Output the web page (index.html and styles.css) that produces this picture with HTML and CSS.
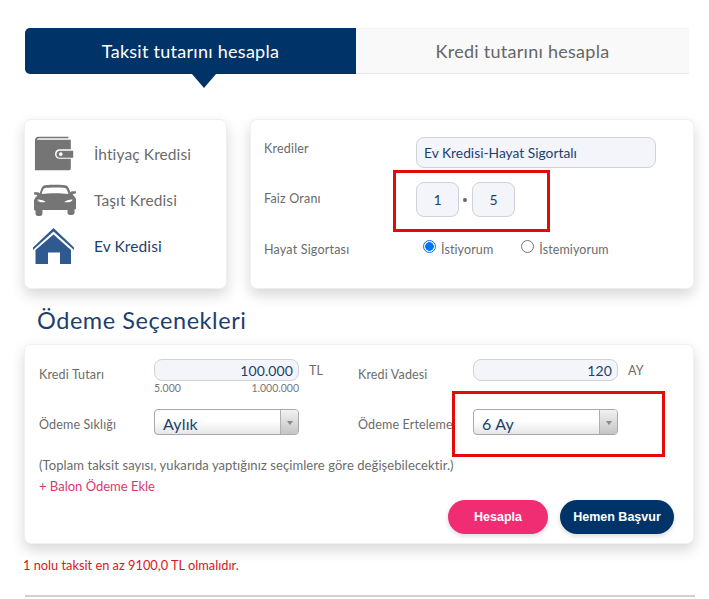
FILE: index.html
```html
<!DOCTYPE html>
<html lang="tr">
<head>
    <meta charset="UTF-8">
    <meta name="viewport" content="width=device-width, initial-scale=1.0">
    <title>Kredi Hesaplama</title>
    <link rel="stylesheet" href="styles.css">
</head>
<body>
    <div class="page">
        <div class="tabs">
            <div class="tab active">Taksit tutarını hesapla</div>
            <div class="tab">Kredi tutarını hesapla</div>
        </div>

        <div class="top-row">
            <div class="card types">
                <div class="type">
                    <svg class="type-icon" viewBox="0 0 46 36" width="44" height="36">
                        <path fill="#757575" d="M5 0h31v1.500H5.500C4 1.500 3 2.500 3 3h35.500v10H27c-3 0-5 2-5 5s2 5 5 5h11.500v10c0 1.500-.5 2-2 2H1V4C1 1.500 2.500 0 5 0z"/>
                        <path fill="#757575" d="M27 14.500h14v7.500H27c-2 0-3.500-1.700-3.500-3.800s1.500-3.700 3.500-3.700zm1 1.800a1.900 1.900 0 1 0 0 3.800 1.900 1.900 0 0 0 0-3.800z"/>
                    </svg>
                    <span>İhtiyaç Kredisi</span>
                </div>
                <div class="type">
                    <svg class="type-icon" viewBox="1 0 44 32" width="44" height="32">
                        <path fill="#757575" fill-rule="evenodd" d="M11 1.500C14 .5 30 .5 33 1.500c1.500.5 2.500 2 3.500 4.500l1 2.500 1-1.200H43v2l-3.500 1c1.500 2 3 3 3.500 5v8.700c0 1-.7 1.500-1.500 1.500v3c0 1.500-1 2.500-2.500 2.500h-2c-1.500 0-2.500-1-2.500-2.500v-2.500H9.500v2.500C9.500 31 8.500 32 7 32H5c-1.500 0-2.500-1-2.500-2.500v-3C1.700 26.500 1 26 1 25v-8.700c.5-2 2-3 3.500-5L1 10.300v-2h4.500l1 1.200 1-2.500C8.500 3.500 9.500 2 11 1.500zM12 4c-1 .3-1.500 1-2.200 2.500L8.500 10c7-1 20-1 27 0l-1.300-3.500C33.500 5 33 4.300 32 4 28 3.200 16 3.200 12 4zM4.500 15.500c0 1.500 1.500 2.500 4 2.700 2 .2 3.500 0 4-.3-1-1.200-5-2.400-8-2.400zm35 0c-3 0-7 1.200-8 2.400.5.300 2 .5 4 .3 2.500-.2 4-1.200 4-2.700z"/>
                    </svg>
                    <span>Taşıt Kredisi</span>
                </div>
                <div class="type current">
                    <svg class="type-icon" viewBox="2 0 44 36" width="44" height="36">
                        <path fill="#2f5a8f" d="M21.500 0 42 19.500v2.500L21.500 3.500 1 22v-2.500z"/>
                        <path fill="#2f5a8f" d="M21.500 6.500 39 22v14H28V24.500H16V36H3.500V22z"/>
                    </svg>
                    <span>Ev Kredisi</span>
                </div>
            </div>

            <div class="card credit">
                <div class="credit-row">
                    <label>Krediler</label>
                    <div class="field wide">Ev Kredisi-Hayat Sigortalı</div>
                </div>
                <div class="credit-row rate-row">
                    <label>Faiz Oranı</label>
                    <div class="rate">
                        <div class="field digit">1</div>
                        <span class="dot"></span>
                        <div class="field digit">5</div>
                    </div>
                </div>
                <div class="credit-row insurance-row">
                    <label>Hayat Sigortası</label>
                    <div class="radios">
                        <span class="radio-item"><span class="radio checked"></span>İstiyorum</span>
                        <span class="radio-item"><span class="radio"></span>İstemiyorum</span>
                    </div>
                </div>
            </div>
        </div>

        <h2 class="section-title">Ödeme Seçenekleri</h2>

        <div class="card payment">
            <div class="pay-grid">
                <label>Kredi Tutarı</label>
                <div class="amount">
                    <div class="field number">100.000</div>
                    <div class="limits"><span>5.000</span><span>1.000.000</span></div>
                </div>
                <span class="unit">TL</span>
                <label>Kredi Vadesi</label>
                <div class="amount">
                    <div class="field number">120</div>
                </div>
                <span class="unit">AY</span>

                <label>Ödeme Sıklığı</label>
                <div class="select">Aylık<span class="select-arrow"></span></div>
                <span></span>
                <label>Ödeme Erteleme</label>
                <div class="select">6 Ay<span class="select-arrow"></span></div>
                <span></span>
            </div>

            <p class="note">(Toplam taksit sayısı, yukarıda yaptığınız seçimlere göre değişebilecektir.)</p>
            <a class="balloon">+ Balon Ödeme Ekle</a>

            <div class="actions">
                <div class="btn pink">Hesapla</div>
                <div class="btn navy">Hemen Başvur</div>
            </div>
        </div>

        <p class="error">1 nolu taksit en az 9100,0 TL olmalıdır.</p>
        <hr class="line">

        <div class="mark mark-rate"></div>
        <div class="mark mark-delay"></div>
    </div>
</body>
</html>
```

FILE: styles.css
```css
* {
    box-sizing: border-box;
}
html, body {
    margin: 0;
    height: 100%;
    overflow: hidden;
}
body {
    background-color: white;
    font-family: "Lato", "Liberation Sans", sans-serif;
    color: #666;
}
.page {
    position: relative;
    width: 709px;
    height: 599px;
    padding: 28px 14px 0 24px;
}
.tabs {
    display: flex;
    margin-left: 1px;
    width: 664px;
    height: 46px;
}
.tab {
    flex: 1;
    display: flex;
    align-items: center;
    justify-content: center;
    font-size: 18px;
    letter-spacing: 0.27px;
    background-color: #f9f9f9;
    border-bottom: 1px solid #e6e6e6;
    border-top: 1px solid #f3f3f3;
    color: #666;
}
.tab.active {
    position: relative;
    flex: 0 0 331px;
    background-color: #003468;
    border: 0;
    border-radius: 5px 0 0 5px;
    color: white;
}
.tab.active::after {
    content: "";
    position: absolute;
    left: 167px;
    top: 46px;
    border-left: 12px solid transparent;
    border-right: 12px solid transparent;
    border-top: 14px solid #003468;
}
.top-row {
    display: flex;
    gap: 23px;
    margin-top: 45px;
}
.card {
    background-color: white;
    border: 1px solid #f0f0f0;
    border-radius: 7px;
    box-shadow: 0 6px 14px rgba(0,0,0,0.16);
}
.types {
    width: 203px;
    height: 170px;
    padding: 11px 0 0 9px;
}
.type {
    display: flex;
    align-items: center;
    height: 46px;
    font-size: 15.5px;
    letter-spacing: 0.1px;
    color: #6b6b6b;
}
.type-icon {
    flex: none;
    margin-right: 16px;
    overflow: visible;
}
.type.current {
    color: #1d3f6e;
}
.credit {
    width: 444px;
    height: 170px;
    padding-top: 17px;
}
.credit-row {
    display: flex;
    align-items: center;
}
.credit-row label {
    width: 165px;
    padding-left: 13px;
    font-size: 12.5px;
    letter-spacing: 0.2px;
    color: #6b6b6b;
}
.credit-row:first-child label {
    margin-top: -8px;
}
.rate-row {
    margin-top: 14px;
}
.rate-row label {
    margin-top: -3px;
}
.insurance-row {
    margin-top: 25px;
}
.field {
    background-color: #f3f5fa;
    border: 1px solid #cfd2d6;
    border-radius: 8px;
    color: #1d3f6e;
}
.wide {
    width: 240px;
    height: 31px;
    padding-left: 7px;
    line-height: 30px;
    font-size: 13.8px;
}
.rate {
    display: flex;
    align-items: center;
}
.digit {
    width: 43px;
    height: 35px;
    line-height: 34px;
    text-align: center;
    font-size: 14px;
}
.dot {
    width: 4px;
    height: 4px;
    margin: 0 5px 0 4px;
    border-radius: 50%;
    background-color: #666;
}
.radios {
    display: flex;
    gap: 28px;
    font-size: 12.5px;
    letter-spacing: 0.1px;
    color: #6b6b6b;
}
.radio-item {
    display: flex;
    align-items: center;
    margin-left: 7px;
}
.radio-item + .radio-item {
    margin-left: 0;
}
.radio {
    width: 13px;
    height: 13px;
    margin-right: 5px;
    margin-top: -7px;
    border: 1px solid #757575;
    border-radius: 50%;
    background-color: white;
}
.radio.checked {
    border: 1.5px solid #0075ff;
    background: radial-gradient(circle, #0075ff 0, #0075ff 4px, white 4.6px);
}
.section-title {
    margin: 18px 0 0 13px;
    height: 35px;
    font-weight: normal;
    font-size: 23.5px;
    letter-spacing: 0.55px;
    line-height: 27px;
    color: #1d3f6e;
}
.payment {
    width: 670px;
    height: 200px;
    margin-top: 2px;
    padding: 14px 19px 0 14px;
}
.pay-grid {
    display: grid;
    grid-template-columns: 115px 145px 59px 115px 145px auto;
    grid-template-rows: 50px 26px;
    font-size: 12.5px;
    letter-spacing: 0.15px;
}
.pay-grid label {
    color: #6b6b6b;
    padding-top: 8px;
}
.number {
    height: 22px;
    padding-right: 5px;
    text-align: right;
    line-height: 21px;
    font-size: 14px;
    letter-spacing: 0.1px;
}
.limits {
    display: flex;
    justify-content: space-between;
    margin-top: 1px;
    font-size: 10.5px;
    letter-spacing: 0;
    line-height: 12px;
    color: #777;
}
.unit {
    padding: 4px 0 0 10px;
    font-size: 12.5px;
    color: #6b6b6b;
}
.select {
    position: relative;
    height: 26px;
    padding-left: 8px;
    border: 1px solid #a8a8a8;
    border-radius: 4px;
    background: linear-gradient(to bottom, white 45%, #e6e6e6);
    color: #1d3f6e;
    font-size: 16px;
    line-height: 27px;
}
.select-arrow {
    position: absolute;
    right: 0;
    top: 0;
    bottom: 0;
    width: 18px;
    border-left: 1px solid #b0b0b0;
    border-radius: 0 3px 3px 0;
    background: linear-gradient(to bottom, #f2f2f2, #c4c4c4);
}
.select-arrow::after {
    content: "";
    position: absolute;
    left: 6px;
    top: 11px;
    border-left: 3px solid transparent;
    border-right: 3px solid transparent;
    border-top: 4px solid #888;
}
.note {
    margin: 22px 0 0;
    font-size: 13px;
    letter-spacing: 0.08px;
    line-height: 16px;
    color: #6b6b6b;
}
.balloon {
    display: block;
    margin-top: 5px;
    font-size: 13px;
    line-height: 16px;
    color: #d6396f;
}
.actions {
    display: flex;
    justify-content: flex-end;
    gap: 12px;
    margin-top: 6px;
}
.btn {
    height: 34px;
    border-radius: 17px;
    text-align: center;
    line-height: 34px;
    font-family: "Liberation Sans", sans-serif;
    font-size: 12.5px;
    font-weight: bold;
    color: white;
    box-shadow: 0 2px 5px rgba(0,0,0,0.15);
}
.pink {
    width: 100px;
    background-color: #f02c72;
}
.navy {
    width: 114px;
    background-color: #003468;
}
.error {
    margin: 13px 0 0 -1px;
    font-size: 12.8px;
    line-height: 16px;
    color: #d9151f;
}
.line {
    width: 670px;
    height: 2px;
    margin: 22px 0 0 1px;
    border: 0;
    background-color: #d0d0d0;
}
.mark {
    position: absolute;
    border: 3px solid #e30a0a;
}
.mark-rate {
    left: 393px;
    top: 170px;
    width: 157px;
    height: 62px;
}
.mark-delay {
    left: 452px;
    top: 391px;
    width: 213px;
    height: 66px;
}
```
